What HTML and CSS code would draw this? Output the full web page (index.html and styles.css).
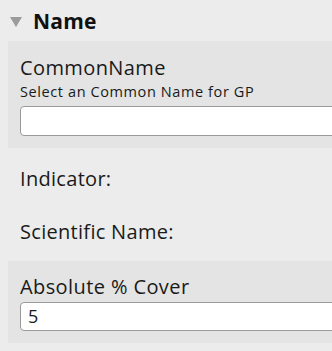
FILE: index.html
```html
<!DOCTYPE html>
<html>
<head>
<meta charset="utf-8">
<link rel="stylesheet" href="styles.css">
</head>
<body>
<div class="page">
  <div class="group-header">
    <span class="caret"></span>
    <span class="group-title">Name</span>
  </div>
  <div class="question">
    <div class="label">CommonName</div>
    <div class="hint">Select an Common Name for GP</div>
    <div class="input"></div>
  </div>
  <div class="note">Indicator:</div>
  <div class="note">Scientific Name:</div>
  <div class="question q2">
    <div class="label">Absolute % Cover</div>
    <div class="input">5</div>
  </div>
</div>
</body>
</html>
```
FILE: styles.css
```css
html, body {
  margin: 0;
  padding: 0;
  background: #ebeceb;
  overflow: hidden;
}
.page {
  width: 332px;
  height: 351px;
  overflow: hidden;
  font-family: "Open Sans", Lato, sans-serif;
  color: #1a1a1a;
}
.group-header {
  display: flex;
  align-items: center;
  height: 41px;
  padding-left: 10px;
  box-sizing: border-box;
}
.caret {
  width: 0;
  height: 0;
  border-left: 6.5px solid transparent;
  border-right: 6.5px solid transparent;
  border-top: 10px solid #9b9b9b;
  margin-right: 11px;
  margin-top: 2px;
}
.group-title {
  font-size: 21px;
  font-weight: 700;
  color: #111;
  letter-spacing: 0.2px;
}
.question {
  background: #e3e4e3;
  margin-left: 8px;
  margin-right: -30px;
  padding: 15px 12px 12px 12px;
}
.label {
  font-size: 20px;
  line-height: 24px;
  letter-spacing: 0.4px;
}
.hint {
  font-size: 14.5px;
  line-height: 18px;
  margin-top: 3px;
  letter-spacing: 0.6px;
}
.input {
  margin-top: 5px;
  height: 30px;
  box-sizing: border-box;
  background: #fff;
  border: 1px solid #9a9a9a;
  border-radius: 4px;
  font-size: 18px;
  line-height: 27px;
  padding-left: 7px;
}
.note {
  font-size: 20px;
  line-height: 24px;
  padding-left: 20px;
  margin-top: 19px;
  letter-spacing: 0.3px;
}
.note + .note {
  margin-top: 29px;
}
.q2 {
  margin-top: 17px;
}
.q2 .input {
  height: 29px;
  margin-top: 3px;
}
.q2 {
  padding-top: 14px;
}
```
